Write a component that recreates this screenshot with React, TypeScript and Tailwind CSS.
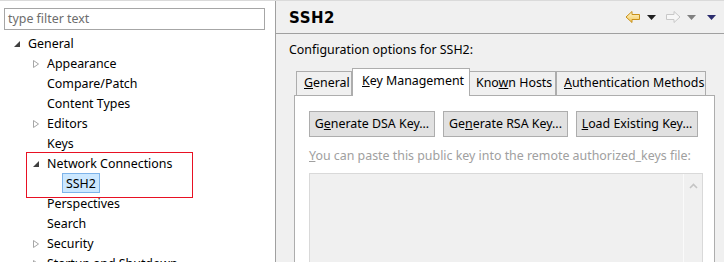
import React from "react";

const Expanded = () => (
  <svg width="8" height="8" viewBox="0 0 8 8" className="shrink-0">
    <polygon points="7,1 7,7 1,7" fill="#404040" />
  </svg>
);

const Collapsed = () => (
  <svg width="8" height="10" viewBox="0 0 8 10" className="shrink-0">
    <polygon points="1.5,1.5 6.5,5 1.5,8.5" fill="none" stroke="#a6a6a6" strokeWidth="1" />
  </svg>
);

type Row = { label: string; level: number; exp?: "e" | "c"; sel?: boolean };

const rows: Row[] = [
  { label: "General", level: 0, exp: "e" },
  { label: "Appearance", level: 1, exp: "c" },
  { label: "Compare/Patch", level: 1 },
  { label: "Content Types", level: 1 },
  { label: "Editors", level: 1, exp: "c" },
  { label: "Keys", level: 1 },
  { label: "Network Connections", level: 1, exp: "e" },
  { label: "SSH2", level: 2, sel: true },
  { label: "Perspectives", level: 1 },
  { label: "Search", level: 1 },
  { label: "Security", level: 1, exp: "c" },
  { label: "Startup and Shutdown", level: 1, exp: "c" },
];

const indent = ["pl-[13px]", "pl-[32px]", "pl-[62px]"];

function TreeRow({ r }: { r: Row }) {
  return (
    <div className={`flex h-[20px] shrink-0 items-center whitespace-nowrap ${indent[r.level]}`}>
      {r.level < 2 && (
        <div className="relative top-[1px] flex w-[15px] items-center">
          {r.exp === "e" ? <Expanded /> : r.exp === "c" ? <Collapsed /> : null}
        </div>
      )}
      {r.sel ? (
        <span className="h-[20px] border border-[#7eb4ea] bg-[#cce8ff] px-[3px] pt-[1px] leading-[18px]">{r.label}</span>
      ) : (
        <span className="relative top-[1px] leading-[20px]">{r.label}</span>
      )}
    </div>
  );
}

const BackArrow = () => (
  <svg width="16" height="14" viewBox="0 0 16 14">
    <defs>
      <linearGradient id="ba" x1="0" y1="0" x2="0" y2="1">
        <stop offset="0" stopColor="#fff7d0" />
        <stop offset="1" stopColor="#f3c75a" />
      </linearGradient>
    </defs>
    <path d="M1 7 L7 1.5 L7 4.5 L14.5 4.5 L14.5 9.5 L7 9.5 L7 12.5 Z" fill="url(#ba)" stroke="#c8901a" strokeWidth="1" strokeLinejoin="round" />
  </svg>
);

const FwdArrow = () => (
  <svg width="16" height="14" viewBox="0 0 16 14">
    <path d="M15 7 L9 1.5 L9 4.5 L1.5 4.5 L1.5 9.5 L9 9.5 L9 12.5 Z" fill="#f7f7f7" stroke="#c8c8c8" strokeWidth="1" strokeLinejoin="round" />
  </svg>
);

const Tri = ({ color }: { color: string }) => (
  <svg width="9" height="5" viewBox="0 0 9 5">
    <polygon points="0,0 9,0 4.5,5" fill={color} />
  </svg>
);

export default function App() {
  return (
    <div
      className="flex h-[262px] w-[724px] overflow-hidden border-t border-[#dadada] bg-[#f0f0f0] text-[12.4px] text-black"
      style={{ fontFamily: '"Noto Sans", "Noto Sans CJK SC", sans-serif' }}
    >
      {/* Left panel */}
      <div className="flex w-[276px] shrink-0 flex-col border-r border-[#a0a0a0] bg-white">
        <div className="mt-[7px] ml-[4px] flex h-[22px] w-[261px] shrink-0 items-center whitespace-nowrap border border-[#a6a6a6] px-[3px] text-[#6d6d6d]">
          type filter text
        </div>
        <div className="relative mt-[3px] flex shrink-0 flex-col">
          {rows.map((r) => (
            <TreeRow key={r.label} r={r} />
          ))}
          <div className="pointer-events-none absolute left-[26px] top-[119px] h-[46px] w-[167px] border border-[#e81123]" />
        </div>
      </div>

      {/* Right panel */}
      <div className="flex min-w-0 flex-1 flex-col whitespace-nowrap">
        <div className="flex h-[33px] shrink-0 items-center justify-between border-b border-[#a0a0a0] pl-[13px] pr-[8px]">
          <span className="relative top-[1px] text-[15px] font-semibold tracking-[0.5px]" style={{ fontFamily: '"DejaVu Sans", sans-serif' }}>
            SSH2
          </span>
          <div className="flex items-center">
            <BackArrow />
            <span className="ml-[6px] flex"><Tri color="#202020" /></span>
            <span className="ml-[9px] flex"><FwdArrow /></span>
            <span className="ml-[6px] flex"><Tri color="#808080" /></span>
            <span className="ml-[11px] flex"><Tri color="#2c2d6e" /></span>
          </div>
        </div>

        <div className="shrink-0 pl-[13px] pt-[6px] leading-[20px]">Configuration options for SSH2:</div>

        <div className="ml-[18px] mt-[8px] flex w-[421px] shrink-0 flex-col">
          <div className="relative z-10 flex h-[27px] shrink-0 items-end pl-[2px]">
            <div className="flex h-[24px] w-[56px] items-center border border-b-0 border-[#adadad] bg-[#f0f0f0] pl-[7px]">
              <span><span className="underline">G</span>eneral</span>
            </div>
            <div className="-mb-px flex h-[28px] w-[118px] items-center border border-b-0 border-[#adadad] bg-white pb-[2px] pl-[9px]">
              <span><span className="underline">K</span>ey Management</span>
            </div>
            <div className="flex h-[24px] w-[86px] items-center border border-b-0 border-l-0 border-[#adadad] bg-[#f0f0f0] pl-[6px]">
              <span>Kno<span className="underline">w</span>n Hosts</span>
            </div>
            <div className="flex h-[24px] w-[150px] items-center border border-b-0 border-[#adadad] bg-[#f0f0f0] pl-[7px]">
              <span><span className="underline">A</span>uthentication Methods</span>
            </div>
          </div>
          <div className="flex h-[200px] shrink-0 flex-col border border-[#adadad] bg-white pl-[14px] pr-[11px] pt-[15px]">
            <div className="flex shrink-0 gap-[8px]">
              <button className="h-[26px] w-[126px] border border-[#adadad] bg-[#e1e1e1]">
                G<span className="underline">e</span>nerate DSA Key...
              </button>
              <button className="h-[26px] w-[125px] border border-[#adadad] bg-[#e1e1e1]">
                Ge<span className="underline">n</span>erate RSA Key...
              </button>
              <button className="h-[26px] w-[122px] border border-[#adadad] bg-[#e1e1e1]">
                <span className="underline">L</span>oad Existing Key...
              </button>
            </div>
            <div className="mt-[9px] shrink-0 leading-[20px] text-[#a0a0a0]">
              <span className="underline">Y</span>ou can paste this public key into the remote authorized_keys file:
            </div>
            <div className="mt-[7px] flex h-[120px] w-[394px] shrink-0 border border-[#d9d9d9] bg-[#f0f0f0]">
              <div className="flex-1" />
              <div className="flex w-[19px] justify-center border-l border-[#fafafa] pt-[9px]">
                <svg width="9" height="6" viewBox="0 0 9 6">
                  <path d="M1 5 L4.5 1.5 L8 5" fill="none" stroke="#c4c4c4" strokeWidth="1.6" />
                </svg>
              </div>
            </div>
          </div>
        </div>
      </div>
    </div>
  );
}
